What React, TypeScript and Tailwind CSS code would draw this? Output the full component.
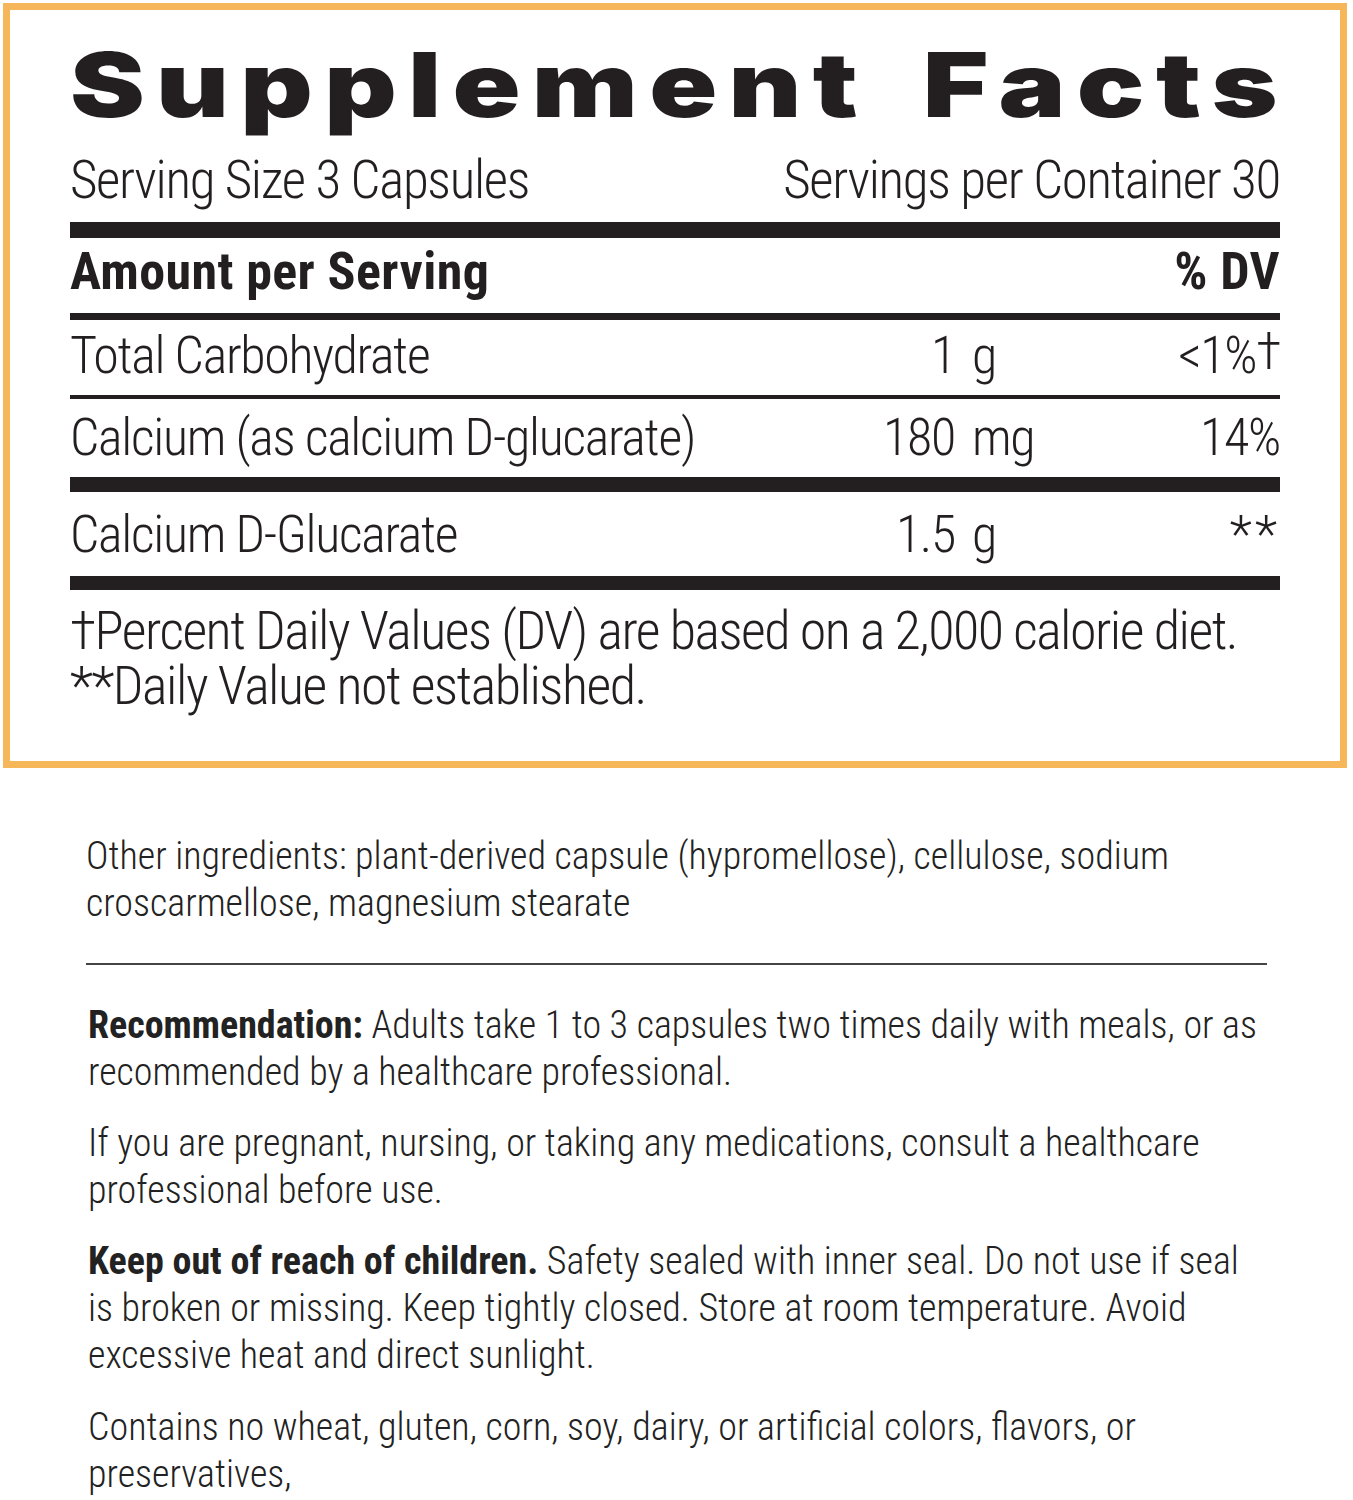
import React from "react";

type Row = { name: string; amount: string; unit: string; dv: React.ReactNode; h: string; lead: string; pt: string };

const rows: Row[] = [
  { name: "Total Carbohydrate", amount: "1", unit: "g", dv: <>&lt;1%<span className="relative -top-[4px]">†</span></>, h: "h-[75px]", lead: "leading-[72px]", pt: "pt-0" },
  { name: "Calcium (as calcium D-glucarate)", amount: "180", unit: "mg", dv: "14%", h: "h-[78px]", lead: "leading-[78px]", pt: "pt-0" },
  { name: "Calcium D-Glucarate", amount: "1.5", unit: "g", dv: <span className="tracking-[3px]">**</span>, h: "h-[84px]", lead: "leading-[78px]", pt: "pt-[4px]" },
];

const bars = ["h-[4px]", "h-[15px]", "h-[14px]"];

export default function App() {
  return (
    <div className="w-[1353px] min-h-[1500px] overflow-hidden bg-white pt-[3px] [font-family:Roboto,sans-serif] text-[#231f20]">
      {/* label panel */}
      <div className="ml-[3px] w-[1344px] h-[765px] border-[7px] border-[#f6b75a] px-[60px] pt-[30px] [font-stretch:75%] font-light tracking-[-1.3px]">
        <h1 className="w-fit origin-left scale-x-[1.263] [font-family:Inter,sans-serif] [font-stretch:100%] font-black text-[89px] leading-[89px] tracking-[0.1em] [word-spacing:16px] whitespace-nowrap">
          Supplement Facts
        </h1>
        <div className="mt-[21px] flex justify-between text-[53px] leading-[60px]">
          <span>Serving Size 3 Capsules</span>
          <span>Servings per Container 30</span>
        </div>
        <div className="mt-[12px] h-[16px] bg-[#231f20]" />
        <div className="h-[75px] flex justify-between font-bold text-[52px] leading-[68px] tracking-[0.4px]">
          <span>Amount per Serving</span>
          <span>% DV</span>
        </div>
        <div className="h-[7px] bg-[#231f20]" />
        {rows.map((r, i) => (
          <React.Fragment key={r.name}>
            <div className={`${r.h} ${r.pt} grid grid-cols-[720px_165px_auto_1fr] text-[52px] ${r.lead}`}>
              <span className="whitespace-nowrap">{r.name}</span>
              <span className="text-right">{r.amount}</span>
              <span className="pl-[17px]">{r.unit}</span>
              <span className="text-right whitespace-nowrap">{r.dv}</span>
            </div>
            <div className={`${bars[i]} bg-[#231f20]`} />
          </React.Fragment>
        ))}
        <p className="mt-[13px] text-[54px] leading-[55px] tracking-[-1.5px] whitespace-nowrap">
          †Percent Daily Values (DV) are based on a 2,000 calorie diet.
          <br />
          **Daily Value not established.
        </p>
      </div>

      {/* directions */}
      <div className="ml-[86px] w-[1181px] pt-[65px] pb-[10px] [font-stretch:75%] font-light text-[38px] leading-[47px] text-[#222]">
        <p>
          Other ingredients: plant-derived capsule (hypromellose), cellulose, sodium croscarmellose, magnesium stearate
        </p>
        <hr className="mt-[36px] border-0 h-[2px] bg-[#444]" />
        <p className="mt-[37px] pl-[2px]">
          <span className="font-bold">Recommendation:</span> Adults take 1 to 3 capsules two times daily with meals, or as recommended by a healthcare professional.
        </p>
        <p className="mt-6 pl-[2px]">
          If you are pregnant, nursing, or taking any medications, consult a healthcare professional before use.
        </p>
        <p className="mt-6 pl-[2px]">
          <span className="font-bold">Keep out of reach of children.</span> Safety sealed with inner seal. Do not use if seal is broken or missing. Keep tightly closed. Store at room temperature. Avoid excessive heat and direct sunlight.
        </p>
        <p className="mt-[25px] pl-[2px]">
          Contains no wheat, gluten, corn, soy, dairy, or artificial colors, flavors, or preservatives,
        </p>
      </div>
    </div>
  );
}
